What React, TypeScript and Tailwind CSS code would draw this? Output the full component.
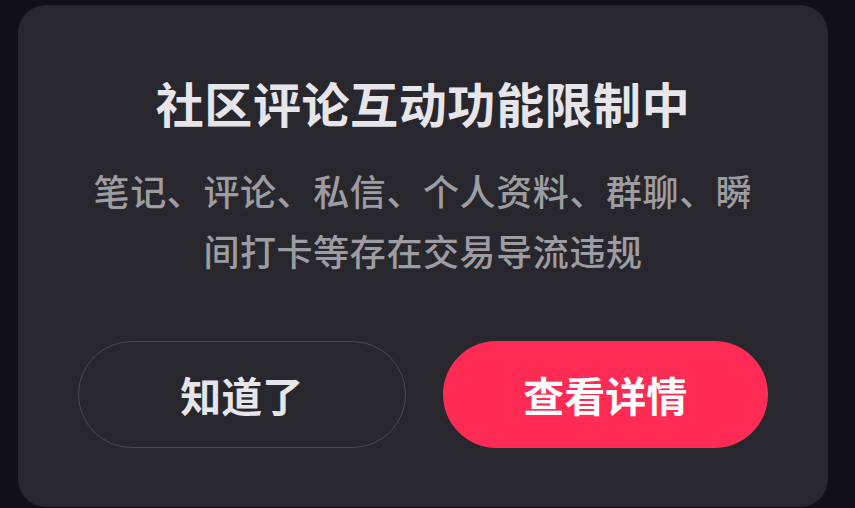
const cjk = "font-['Noto_Sans_CJK_SC','Noto_Sans',sans-serif]";

export default function App() {
  return (
    <div className={`h-[508px] w-full overflow-hidden bg-[#111015] pl-[18px] pt-[5px] ${cjk}`}>
      <div className="flex h-[502px] w-[810px] flex-col items-center rounded-[28px] bg-[#28272d] px-[60px] pt-[69px]">
        <h2 className="text-[48px] font-semibold leading-[56px] tracking-[0.6px] text-[#e6e5ea]">
          社区评论互动功能限制中
        </h2>
        <p className="mt-[30px] w-[668px] text-center text-[36px] font-medium leading-[60px] tracking-[0.6px] text-[#9d9ca1]">
          笔记、评论、私信、个人资料、群聊、瞬间打卡等存在交易导流违规
        </p>
        <div className="mt-[61px] flex w-full gap-[37px]">
          <button className="flex h-[107px] flex-1 items-center justify-center rounded-full border-[1.5px] border-[#4b4a51] text-[41px] font-semibold text-[#e6e5ea]">
            知道了
          </button>
          <button className="flex h-[107px] flex-1 items-center justify-center rounded-full bg-[#fe2c55] text-[41px] font-semibold text-white">
            查看详情
          </button>
        </div>
      </div>
    </div>
  );
}
